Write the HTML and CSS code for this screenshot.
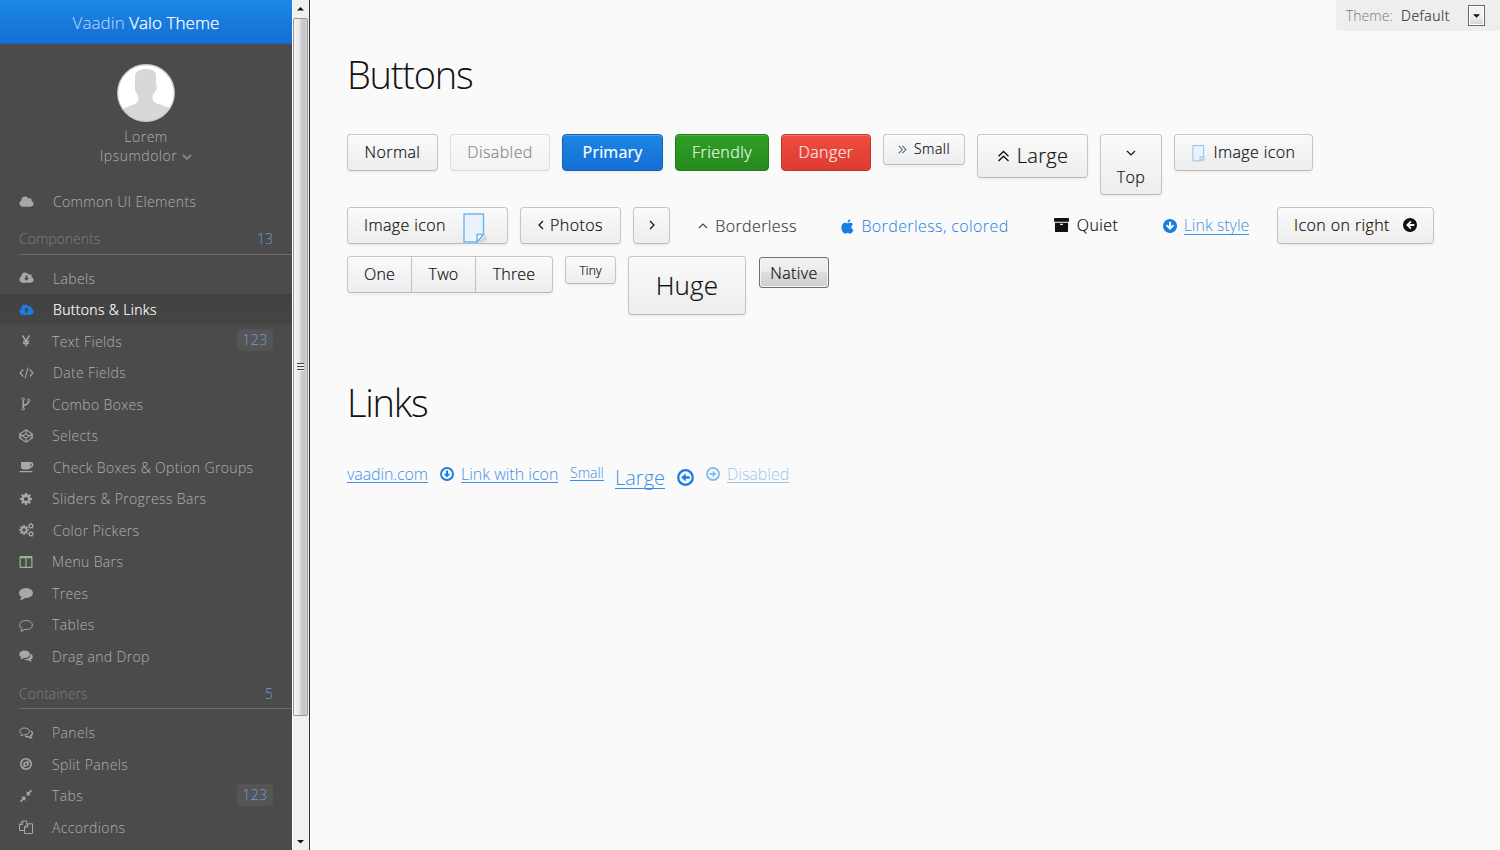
FILE: index.html
```html
<!DOCTYPE html>
<html lang="en">
<head>
<meta charset="utf-8">
<title>Vaadin Valo Theme</title>
<link rel="stylesheet" href="styles.css">
</head>
<body>
<svg class="defs" aria-hidden="true">
  <symbol id="cloud" viewBox="0 0 2048 1792"><path d="M1984 1152q0 159-112.500 271.500t-271.500 112.500h-1088q-185 0-316.500-131.500t-131.500-316.500q0-132 71-241.500t187-163.500q-2-28-2-43 0-212 150-362t362-150q158 0 286.500 88t187.500 230q70-62 166-62 106 0 181 75t75 181q0 75-41 138 129 30 213 134.500t84 239.500z"/></symbol>
  <symbol id="cloud-down" viewBox="0 0 2048 1792"><path fill-rule="evenodd" d="M1984 1152q0 159-112.500 271.500t-271.500 112.500h-1088q-185 0-316.500-131.500t-131.500-316.500q0-132 71-241.500t187-163.500q-2-28-2-43 0-212 150-362t362-150q158 0 286.500 88t187.500 230q70-62 166-62 106 0 181 75t75 181q0 75-41 138 129 30 213 134.500t84 239.500zM900 540v340H670l355 400 355-400h-230V540z"/></symbol>
  <symbol id="cloud-up" viewBox="0 0 2048 1792"><path fill-rule="evenodd" d="M1984 1152q0 159-112.500 271.500t-271.500 112.500h-1088q-185 0-316.500-131.500t-131.500-316.500q0-132 71-241.500t187-163.500q-2-28-2-43 0-212 150-362t362-150q158 0 286.500 88t187.500 230q70-62 166-62 106 0 181 75t75 181q0 75-41 138 129 30 213 134.500t84 239.500zM900 1280V940H670l355-400 355 400h-230v340z"/></symbol>
  <symbol id="yen" viewBox="0 0 14 14"><path class="s" d="M3.500 1.500 7 7l3.500-5.500M7 7v5.500M4 7.500h6M4 9.500h6" stroke-width="1.400"/></symbol>
  <symbol id="code" viewBox="0 0 15 14"><path class="s" d="M4.300 3.500 1 7l3.300 3.500M10.700 3.500 14 7l-3.300 3.500M9 1.700 6 12.300" stroke-width="1.100"/></symbol>
  <symbol id="fork" viewBox="0 0 14 14"><g class="s" stroke-width="1"><circle cx="4.200" cy="2.200" r="1.200"/><circle cx="4.200" cy="11.700" r="1.200"/><circle cx="9.700" cy="3.300" r="1.200"/><path d="M4.200 3.400v7.100M9.700 4.500C9.700 8 4.200 7 4.200 10" stroke-width="1.400"/></g></symbol>
  <symbol id="codepen" viewBox="0 0 14 14"><path class="s" d="M7 .8 13.300 5v4L7 13.200.7 9V5zM.7 5 7 9.200 13.300 5M.7 9 7 4.800 13.300 9M7 .8v4M7 9.200v4" stroke-width="1.100"/></symbol>
  <symbol id="coffee" viewBox="0 0 15 14"><path fill-rule="evenodd" d="M2 2h9.500c3.800-.3 3.800 5.700 0 5.700Q11 9.500 9 9.500H4.500Q2 9.500 2 7.200zM11.300 3.500v2.700c1.800.2 1.800-2.900 0-2.700zM.3 11h13.400q-.4 1.300-1.800 1.300H2.100Q.7 12.300.3 11z"/></symbol>
  <symbol id="cog" viewBox="0 0 14 14"><circle class="s" cx="7" cy="7" r="3.400" stroke-width="2.600"/><path class="s" d="M7 .9v2M7 11.100v2M.9 7h2M11.100 7h2M2.700 2.700l1.400 1.400M9.900 9.900l1.400 1.400M2.700 11.300l1.400-1.400M9.900 4.100l1.400-1.400" stroke-width="2.100"/></symbol>
  <symbol id="cogs" viewBox="0 0 15 14"><circle class="s" cx="5" cy="7" r="2.700" stroke-width="1.900"/><path class="s" d="M5 2v1.500M5 10.500V12M0 7h1.500M8.500 7H10M1.500 3.500l1 1M7.500 9.500l1 1M1.500 10.500l1-1M7.500 4.500l1-1" stroke-width="1.700"/><g class="s" stroke-width="1.100"><circle cx="12" cy="3" r="1.700"/><circle cx="12" cy="11" r="1.700"/></g><path class="s" stroke-dasharray="1 1" d="M12 .4a2.600 2.600 0 1 1-.01 0M12 8.400a2.600 2.600 0 1 1-.01 0" stroke-width="1"/></symbol>
  <symbol id="columns" viewBox="0 0 14 14"><path fill-rule="evenodd" d="M1.500 1h11q1 0 1 1v10q0 1-1 1h-11q-1 0-1-1V2q0-1 1-1zM1.700 3.200v8.600h4.700V3.200zm5.900 0v8.600h4.700V3.200z"/></symbol>
  <symbol id="comment" viewBox="0 0 1792 1792"><path d="M1792 896q0 174-120 321.500t-326 233-450 85.500q-70 0-145-8-198 175-460 242-49 14-114 22-17 2-30.500-9t-17.500-29q-3-5 20-48 7-8 31-34.500t34.500-38 31-39.500 32.500-51 27-59 26-76q-157-89-247.500-220t-90.500-281q0-130 71-248.500t191-204.500 286-136.500 348-50.500q244 0 450 85.500t326 233 120 321.500z"/></symbol>
  <symbol id="comment-o" viewBox="0 0 14 14"><path class="s" d="M7 2.500c8.500 0 8.500 9 0 9H5.500Q4 13 1.700 13.300 3 12 3.200 10.600C-1.400 8.500.2 2.500 7 2.500z" stroke-width="1"/></symbol>
  <symbol id="comments" viewBox="0 0 14 14"><path d="M5.500 1.500c7.300 0 7.300 7.500 0 7.500H4.600Q3 10.300 1.200 10.300 2.200 9.500 2.300 8.300C-1.500 6.300.2 1.500 5.500 1.500z"/><path d="M11.500 4.500c3 1.500 3 4.700.3 6 .1 1 .6 1.700 1.200 2.200-1.600 0-2.900-.5-4-1.400-1.500.1-3-.1-4-.9 4.200.2 7-2.300 6.500-5.900z"/></symbol>
  <symbol id="comments-o" viewBox="0 0 14 14"><path class="s" d="M5.500 2c6.600 0 6.600 6.800 0 6.800H4.400Q3.300 9.800 2 9.800 2.700 9 2.700 8C-1 6.300.7 2 5.500 2z"/><path class="s" d="M12 5c2 1.500 1.700 4-.5 5 0 .8.400 1.400.9 1.900-1.300 0-2.200-.4-3.200-1.200-1.200.1-2.200-.1-3-.5" stroke-width="1.400"/></symbol>
  <symbol id="compass" viewBox="0 0 14 14"><circle class="s" cx="7" cy="7" r="5.200" stroke-width="1.600"/><path fill-rule="evenodd" d="M9.700 3.500v4.800l-5.400 2.200V5.700zM6 6.600v2L8 7.800v-2z"/></symbol>
  <symbol id="compress" viewBox="0 0 14 14"><path d="M6.400 7.600v4.500L4.900 10.600 2 13.300.9 12.200l2.700-2.900-1.500-1.500zM7.600 6.400V2l1.500 1.500L12 .7 13.100 1.800 10.400 4.700l1.500 1.500z"/></symbol>
  <symbol id="copy" viewBox="0 0 14 14"><path class="s" d="M5.500 10.500h-5v-6l3-3.500h4.200v3M3.700 1v3.500H.5M5.500 7 8.700 3.800h4.800v9.700h-8zM8.700 3.800V7H5.500"/></symbol>
  <symbol id="chev-down" viewBox="0 0 10 10"><path class="s" d="M1 3 5 7l4-4" stroke-width="1.900"/></symbol>
  <symbol id="angle" viewBox="0 0 10 10"><path class="s" d="M1 3 5 7l4-4" stroke-width="1.200"/></symbol>
  <symbol id="dbl" viewBox="0 0 12 12"><path class="s" d="M1 6.200 6 1.500l5 4.700M1 11 6 6.300 11 11" stroke-width="1.400"/></symbol>
  <symbol id="apple" viewBox="0 0 14 16"><path d="M7 4.700C9 3.800 11.500 3.700 12.900 5.700c-2.500 1.600-2.100 5 .5 6-1 2.300-2.300 4-3.700 4-1 0-1.500-.6-2.600-.6s-1.700.6-2.600.6C2.600 15.700.4 12.500.4 9.200.4 5 3.700 3 7 4.700zM7 4C7 2 8.400.5 10 .3 10.100 2.300 8.900 3.900 7 4z"/></symbol>
  <symbol id="archive" viewBox="0 0 16 15"><path fill-rule="evenodd" d="M.8 0h14.400q.8 0 .8.800V4H0V.8Q0 0 .8 0zM1 5h14v9.200q0 .8-.8.800H1.800Q1 15 1 14.200zm5.500 1.200v1.300h3V6.200z"/></symbol>
  <symbol id="arrow-solid" viewBox="0 0 14 14"><path fill-rule="evenodd" d="M7 0a7 7 0 1 0 .01 0zM6 2.700h2v4.600l1.900-1.900 1.300 1.300L7 11 2.800 6.700l1.300-1.300L6 7.300z"/></symbol>
  <symbol id="arrow-o" viewBox="0 0 14 14"><circle class="s" cx="7" cy="7" r="6" stroke-width="1.900"/><path d="M6 3.500h2v3.300h2.200L7 10.500 3.800 6.800H6z"/></symbol>
  <symbol id="note" viewBox="0 0 24 31"><path d="M15 29 23 22l1 5-5 3z" fill="#d8d8d8"/><path d="M1 1h19.500v20.500L14 29H1z" fill="#eaf2fb" stroke="#6db5ef" stroke-width="1.400"/><path d="M20.500 21.500H14V29z" fill="#fff" stroke="#6db5ef" stroke-width="1.400"/></symbol>
</svg>
<div class="app">
  <aside class="menu">
    <header class="brand"><span><span class="brand-light">Vaadin</span> Valo Theme</span></header>
    <div class="user">
      <svg class="avatar" viewBox="0 0 58 58"><defs><clipPath id="round"><circle cx="29" cy="29" r="28"/></clipPath></defs><circle cx="29" cy="29" r="28.500" fill="#fff"/><path clip-path="url(#round)" fill="#d8d8d8" d="M0 47 18 40Q23 37 21 33 20 29 18 26V13Q18 5 29 5T39 13v7q2 4 0 6-1 3-3 4-1 5 0 6 1 3 6 4l18 7v13H0z"/><circle cx="29" cy="29" r="28.300" fill="none" stroke="#c4c4c4" stroke-width="1.200"/></svg>
      <span class="name">Lorem</span>
      <span class="name">Ipsumdolor <svg class="caret"><use href="#chev-down"/></svg></span>
    </div>
    <nav>
      <a class="item"><svg class="ico wide"><use href="#cloud"/></svg><span class="label">Common UI Elements</span></a>
      <h4 class="section"><span>Components</span><b class="count">13</b></h4>
      <a class="item"><svg class="ico wide"><use href="#cloud-down"/></svg><span class="label">Labels</span></a>
      <a class="item selected"><svg class="ico wide"><use href="#cloud-up"/></svg><span class="label">Buttons &amp; Links</span></a>
      <a class="item"><svg class="ico"><use href="#yen"/></svg><span class="label">Text Fields</span><b class="badge">123</b></a>
      <a class="item"><svg class="ico wide"><use href="#code"/></svg><span class="label">Date Fields</span></a>
      <a class="item"><svg class="ico"><use href="#fork"/></svg><span class="label">Combo Boxes</span></a>
      <a class="item"><svg class="ico"><use href="#codepen"/></svg><span class="label">Selects</span></a>
      <a class="item"><svg class="ico wide"><use href="#coffee"/></svg><span class="label">Check Boxes &amp; Option Groups</span></a>
      <a class="item"><svg class="ico"><use href="#cog"/></svg><span class="label">Sliders &amp; Progress Bars</span></a>
      <a class="item"><svg class="ico wide"><use href="#cogs"/></svg><span class="label">Color Pickers</span></a>
      <a class="item"><svg class="ico green"><use href="#columns"/></svg><span class="label">Menu Bars</span></a>
      <a class="item"><svg class="ico"><use href="#comment"/></svg><span class="label">Trees</span></a>
      <a class="item"><svg class="ico"><use href="#comment-o"/></svg><span class="label">Tables</span></a>
      <a class="item"><svg class="ico"><use href="#comments"/></svg><span class="label">Drag and Drop</span></a>
      <h4 class="section containers"><span>Containers</span><b class="count">5</b></h4>
      <a class="item"><svg class="ico"><use href="#comments-o"/></svg><span class="label">Panels</span></a>
      <a class="item"><svg class="ico"><use href="#compass"/></svg><span class="label">Split Panels</span></a>
      <a class="item"><svg class="ico"><use href="#compress"/></svg><span class="label">Tabs</span><b class="badge">123</b></a>
      <a class="item"><svg class="ico"><use href="#copy"/></svg><span class="label">Accordions</span></a>
    </nav>
  </aside>
  <div class="scrollbar">
    <svg class="sb-arrow" viewBox="0 0 17 17"><path d="M5 10.500 8.500 7l3.500 3.500z"/></svg>
    <div class="thumb"><i class="grip"></i></div>
    <span class="sb-space"></span>
    <svg class="sb-arrow" viewBox="0 0 17 17"><path d="M5 7l3.500 3.500L12 7z"/></svg>
  </div>
  <main class="content">
    <div class="theme"><span class="theme-label">Theme:</span><span class="theme-value">Default</span><button class="drop"><svg viewBox="0 0 8 4"><path d="M0 0h8L4 4z"/></svg></button></div>
    <h1>Buttons</h1>
    <div class="buttons">
      <button class="btn w91">Normal</button>
      <button class="btn disabled w100">Disabled</button>
      <button class="btn primary w101">Primary</button>
      <button class="btn friendly w94">Friendly</button>
      <button class="btn danger w90">Danger</button>
      <button class="btn small"><svg class="i-small"><use href="#dbl"/></svg>Small</button>
      <button class="btn large"><svg class="i-large"><use href="#dbl"/></svg>Large</button>
      <button class="btn top"><svg class="i-angle"><use href="#angle"/></svg><span>Top</span></button>
      <button class="btn w139"><svg class="i-note"><use href="#note"/></svg>Image icon</button>
      <button class="btn note-right"><span>Image icon</span><svg class="i-note-big"><use href="#note"/></svg></button>
      <button class="btn w101 photos"><svg class="i-angle left"><use href="#angle"/></svg>Photos</button>
      <button class="btn only-icon"><svg class="i-angle right"><use href="#angle"/></svg></button>
      <button class="btn flat borderless"><svg class="i-angle up"><use href="#angle"/></svg>Borderless</button>
      <button class="btn flat colored"><svg class="i-apple"><use href="#apple"/></svg>Borderless, colored</button>
      <button class="btn flat quiet"><svg class="i-archive"><use href="#archive"/></svg>Quiet</button>
      <button class="btn flat linkish"><svg class="i-circle"><use href="#arrow-solid"/></svg><u>Link style</u></button>
      <button class="btn icon-right">Icon on right<svg class="i-circle left"><use href="#arrow-solid"/></svg></button>
      <div class="group"><button class="btn one">One</button><button class="btn two">Two</button><button class="btn three">Three</button></div>
      <button class="btn tiny">Tiny</button>
      <button class="btn huge">Huge</button>
      <button class="native">Native</button>
    </div>
    <h1 class="second">Links</h1>
    <div class="links">
      <a class="link l1"><u>vaadin.com</u></a>
      <a class="link l2"><svg class="i-circle"><use href="#arrow-o"/></svg><u>Link with icon</u></a>
      <a class="link l3"><u>Small</u></a>
      <a class="link l4"><u>Large</u></a>
      <a class="link l5"><svg class="i-circle-lg left"><use href="#arrow-o"/></svg></a>
      <a class="link l6"><svg class="i-circle right"><use href="#arrow-o"/></svg><u>Disabled</u></a>
    </div>
  </main>
</div>
</body>
</html>
```
FILE: styles.css
```css
* { box-sizing: border-box; }
body { margin: 0; font: 300 16px/24px "Open Sans", sans-serif; color: #111; background: #fafafa; overflow: hidden; }
button { font: inherit; color: inherit; }
svg { fill: currentColor; flex: none; display: block; }
.s { fill: none; stroke: currentColor; }
.defs { display: none; }
.app { display: flex; height: 850px; }

.menu { width: 292px; background: #4b4b4b; color: #b0b0b0; overflow: hidden; font-size: 14px; }
.brand { height: 44px; padding-top: 3px; display: flex; align-items: center; justify-content: center; font-size: 17px; font-weight: 300; color: #fff; letter-spacing: .05px; -webkit-text-stroke: .25px; background: linear-gradient(#1b88e4, #166ed5); border-bottom: 1px solid #1765bd; }
.brand-light { color: #c2dcf6; -webkit-text-stroke: 0; }
.user { height: 142px; padding-top: 20px; display: flex; flex-direction: column; align-items: center; letter-spacing: .5px; }
.avatar { width: 58px; height: 58px; margin-bottom: 5px; }
.name { line-height: 19px; display: flex; align-items: center; gap: 5px; }
.caret { width: 10px; height: 10px; color: #858585; margin-top: 2px; }
.item { height: 31.500px; display: flex; align-items: center; padding: 2px 19px 0; letter-spacing: .35px; }
.item:first-child { padding-top: 1px; }
.ico { width: 14px; height: 14px; margin: -1.500px 19px 0 0; color: #a8a8a8; }
.ico.wide { width: 15px; }
.ico.green { color: #93b891; }
.label { flex: 1; white-space: nowrap; }
.selected { background: linear-gradient(#414141, #454545); color: #fff; }
.selected .ico { color: #197de1; }
.selected .label { -webkit-text-stroke: .2px; }
.badge { width: 36px; height: 22px; margin-top: -3px; border-radius: 4px; background: #555; color: #6b9fdd; font-weight: 300; line-height: 22px; text-align: center; }
.section { height: 37px; margin: 0 0 7.600px 19px; padding: 9.400px 19px 0 0; border-bottom: 1px solid #696969; display: flex; justify-content: space-between; font-size: 14px; font-weight: 300; color: #7e7e7e; }
.containers { padding-top: 10px; margin-bottom: 8px; }
.count { font-weight: 300; color: #6b9fdd; }

.scrollbar { width: 18px; border-right: 1px solid #2f2f2f; background: #f0f0f0; box-shadow: inset 1px 0 #fff; display: flex; flex-direction: column; align-items: center; }
.sb-arrow { width: 17px; height: 17px; }
.thumb { width: 15px; height: 698px; border: 1px solid #979797; border-radius: 2px; background: linear-gradient(90deg, #f6f6f6, #e6e6e8 45%, #cbcbcf 55%, #c6c6ca 85%, #dcdcdf); display: flex; align-items: center; justify-content: center; margin-top: 1px; }
.grip { width: 7px; height: 8px; background: repeating-linear-gradient(#444 0 1px, #eee 1px 3px); }
.sb-space { flex: 1; }

.content { flex: 1; position: relative; padding: 52px 37px 0; }
h1 { margin: 0; height: 82px; font-size: 38px; line-height: 44px; font-weight: 300; letter-spacing: -1.250px; }
h1.second { margin-top: 65px; }
.theme { position: absolute; top: 0; right: 0; width: 164px; height: 31px; padding: 0 15px 0 10px; background: #eee; border-bottom-left-radius: 4px; display: flex; align-items: center; font-size: 14px; }
.theme-label { width: 55px; color: #777; }
.theme-value { flex: 1; color: #333; letter-spacing: .5px; -webkit-text-stroke: .2px; }
.drop { width: 17px; height: 21px; padding: 0; border: 1px solid #6a6a6a; background: linear-gradient(#f2f2f2 50%, #d4d4d4); box-shadow: inset 0 0 0 1px #fff; display: flex; align-items: center; justify-content: center; }
.drop svg { width: 7px; height: 4px; }

.buttons { display: flex; flex-wrap: wrap; gap: 12px; align-items: flex-start; }
.btn { height: 37px; padding: 0 0 1px; border: 1px solid #c5c5c5; border-bottom-color: #bababa; border-radius: 4px; background: linear-gradient(#fafafa, #ededed); box-shadow: inset 0 1px 0 #fff, 0 2px 3px rgba(0, 0, 0, .05); display: flex; align-items: center; justify-content: center; white-space: nowrap; letter-spacing: .4px; -webkit-text-stroke: .2px; }
.disabled { opacity: .5; }
.primary { color: #fff; font-weight: 400; letter-spacing: .2px; -webkit-text-stroke: .2px; border-color: #1362b5; background: linear-gradient(#1b87e3, #166dd5); box-shadow: inset 0 1px 0 #4d9fe8, 0 2px 3px rgba(0, 0, 0, .05); }
.friendly { color: #eaf7e9; border-color: #227a1b; background: linear-gradient(#2f9f24, #278a1d); box-shadow: inset 0 1px 0 #4bb442; }
.danger { color: #fcebea; border-color: #bb382e; background: linear-gradient(#f04c3e, #de3c31); box-shadow: inset 0 1px 0 #f37468; }
.w90 { width: 90px; } .w91 { width: 91px; } .w94 { width: 94px; } .w100 { width: 100px; } .w101 { width: 101px; } .w139 { width: 139px; }
.small { width: 82px; height: 31px; font-size: 14px; gap: 7px; letter-spacing: .5px; }
.i-small { width: 9px; height: 9px; transform: rotate(90deg); color: #315a75; }
.large { width: 111px; height: 44px; font-size: 20px; gap: 7px; letter-spacing: .3px; }
.i-large { width: 13px; height: 12px; }
.top { width: 62px; height: 61px; flex-direction: column; gap: 7px; padding-top: 8px; }
.i-angle { width: 10px; height: 10px; }
.up { transform: rotate(180deg); }
.left { transform: rotate(90deg); }
.right { transform: rotate(-90deg); }
.i-note { width: 14px; height: 17px; margin: 3px 8px 0 0; }
.note-right { width: 161px; justify-content: flex-start; padding-left: 16px; }
.i-note-big { width: 24px; height: 31px; margin: 7px 0 0 17px; }
.photos { gap: 4px; }
.photos .left { margin-left: -2px; }
.only-icon { width: 37px; }
.flat { border-color: transparent; background: none; box-shadow: none; }
.borderless { width: 131px; gap: 7px; color: #444; padding: 1px 0 0; }
.colored { width: 200px; gap: 7px; color: #197de1; padding: 1px 0 0; -webkit-text-stroke: 0; }
.i-apple { width: 13px; height: 15px; }
.quiet { width: 98px; gap: 8px; }
.i-archive { width: 15px; height: 14px; }
.linkish { width: 118px; gap: 7px; color: #197de1; padding: 1px 0 0; letter-spacing: 0; -webkit-text-stroke: 0; }
u { text-decoration: none; border-bottom: 1px solid #197de1; line-height: 17px; opacity: .85; }
.i-circle { width: 14px; height: 14px; }
.icon-right { width: 157px; gap: 13px; }
.group { display: flex; }
.group .btn, .tiny, .huge { letter-spacing: .15px; }
.one { width: 65px; border-radius: 4px 0 0 4px; }
.two { width: 64px; border-left: 0; border-radius: 0; }
.three { width: 77px; border-left: 0; border-radius: 0 4px 4px 0; }
.tiny { width: 51px; height: 28px; padding: 1px 0 0; font-size: 12px; }
.huge { width: 118px; height: 59px; font-size: 26px; }
.native { width: 70px; height: 31px; margin: 1px 0 0 1px; padding: 0; border: 1px solid #707070; border-radius: 3px; background: linear-gradient(#f2f2f2, #ebebeb 50%, #ddd 50%, #cfcfcf); box-shadow: inset 0 0 0 1px #f5f5f5; letter-spacing: .4px; -webkit-text-stroke: .2px; }

.links { display: flex; gap: 12px; align-items: flex-start; color: #197de1; }
.link { display: flex; align-items: center; gap: 7px; height: 19px; margin-top: 2px; white-space: nowrap; }
.link u { margin-top: 1px; line-height: 16px; }
.l1 { width: 81px; letter-spacing: -.1px; }
.l2 { width: 118px; }
.link.l3 { width: 33px; font-size: 14px; margin-top: 1px; }
.link.l3 u { line-height: 14px; }
.l4 { width: 50px; font-size: 20px; height: 26px; }
.link.l4 u { line-height: 21px; }
.l5 { height: 26px; }
.i-circle-lg { width: 17px; height: 17px; }
.l6 { opacity: .5; }
```
